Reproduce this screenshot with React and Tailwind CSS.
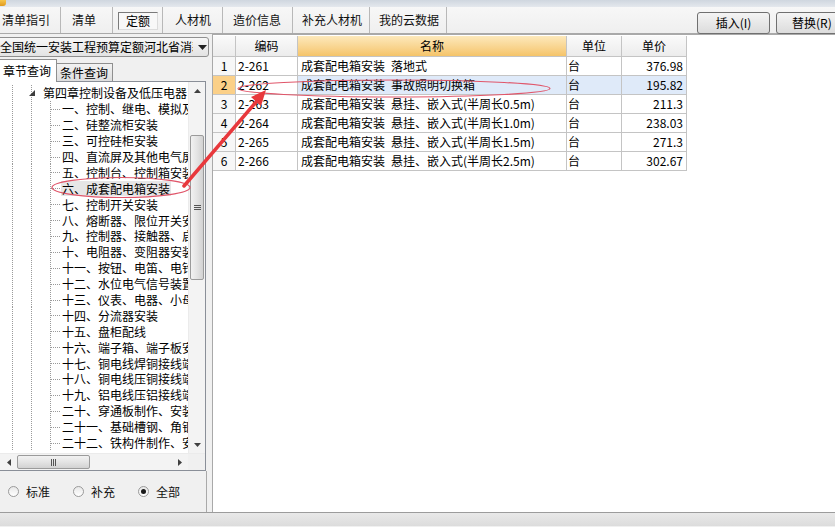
import React from 'react';

const FONT = "font-['Noto_Sans_CJK_SC','Noto_Sans',sans-serif]";

const tabs = [
  { label: '清单指引', w: 'w-[61px]', pl: 'pl-[2px]' },
  { label: '清单', w: 'w-[52px]', pl: 'pl-[11px]' },
  { label: '定额', active: true },
  { label: '人材机', w: 'w-[60px]', pl: 'pl-[12px]' },
  { label: '造价信息', w: 'w-[70px]', pl: 'pl-[10px]' },
  { label: '补充人材机', w: 'w-[77px]', pl: 'pl-[9px]' },
  { label: '我的云数据', w: 'w-[77px]', pl: 'pl-[9px]' },
];

const children = [
  '一、控制、继电、模拟及配电屏安装',
  '二、硅整流柜安装',
  '三、可控硅柜安装',
  '四、直流屏及其他电气屏（柜）安装',
  '五、控制台、控制箱安装',
  '六、成套配电箱安装',
  '七、控制开关安装',
  '八、熔断器、限位开关安装',
  '九、控制器、接触器、启动器安装',
  '十、电阻器、变阻器安装',
  '十一、按钮、电笛、电铃安装',
  '十二、水位电气信号装置安装',
  '十三、仪表、电器、小母线安装',
  '十四、分流器安装',
  '十五、盘柜配线',
  '十六、端子箱、端子板安装',
  '十七、铜电线焊铜接线端子',
  '十八、铜电线压铜接线端子',
  '十九、铝电线压铝接线端子',
  '二十、穿通板制作、安装',
  '二十一、基础槽钢、角钢安装',
  '二十二、铁构件制作、安装',
];

const rows = [
  ['1', '2-261', '成套配电箱安装\u2002落地式', '台', '376.98'],
  ['2', '2-262', '成套配电箱安装\u2002事故照明切换箱', '台', '195.82'],
  ['3', '2-263', '成套配电箱安装\u2002悬挂、嵌入式(半周长0.5m)', '台', '211.3'],
  ['4', '2-264', '成套配电箱安装\u2002悬挂、嵌入式(半周长1.0m)', '台', '238.03'],
  ['5', '2-265', '成套配电箱安装\u2002悬挂、嵌入式(半周长1.5m)', '台', '271.3'],
  ['6', '2-266', '成套配电箱安装\u2002悬挂、嵌入式(半周长2.5m)', '台', '302.67'],
];

function Gutter({ chapter }) {
  if (chapter) {
    return (
      <svg width="43" height="16" className="shrink-0">
        <line x1="12.5" y1="0" x2="12.5" y2="16" stroke="#9a9a9a" strokeDasharray="1 1" />
        <line x1="31.5" y1="0" x2="31.5" y2="16" stroke="#9a9a9a" strokeDasharray="1 1" />
        <polygon points="35,5 35,11 29,11" fill="#3c3c3c" />
      </svg>
    );
  }
  return (
    <svg width="62" height="16" className="shrink-0">
      <line x1="12.5" y1="0" x2="12.5" y2="16" stroke="#9a9a9a" strokeDasharray="1 1" />
      <line x1="31.5" y1="0" x2="31.5" y2="16" stroke="#9a9a9a" strokeDasharray="1 1" />
      <line x1="50.5" y1="0" x2="50.5" y2="16" stroke="#9a9a9a" strokeDasharray="1 1" />
      <line x1="51" y1="8.5" x2="60" y2="8.5" stroke="#9a9a9a" strokeDasharray="1 1" />
    </svg>
  );
}

function Radio({ checked, label }) {
  return (
    <div className="flex items-center gap-[7px]">
      <span className="w-[11px] h-[11px] rounded-full border border-[#9a9a9a] bg-gradient-to-b from-[#e8e8e8] to-[#ffffff] flex items-center justify-center">
        {checked && <span className="w-[5px] h-[5px] rounded-full bg-[#1a1a1a]" />}
      </span>
      <span className="text-[12px] leading-[14px] text-[#111]">{label}</span>
    </div>
  );
}

export default function App() {
  return (
    <div className={`w-[835px] h-[527px] overflow-hidden relative bg-[#f0f0f0] text-black ${FONT}`}>
      {/* top strip */}
      <div className="h-[7px] bg-gradient-to-b from-[#cfd6df] to-[#e4e8ed] flex">
        <div className="w-[6px] h-[6px] rounded-br-[3px] bg-gradient-to-b from-[#f7c64a] to-[#e09a1a]" />
      </div>

      {/* tabs row */}
      <div className="h-[27px] flex items-stretch border-b border-[#a9a9a9] bg-gradient-to-b from-[#f7f7f7] to-[#efefef]">
        {tabs.map((t) =>
          t.active ? (
            <div key={t.label} className="w-[50px] pl-[5px] pt-[5px] border-r border-[#b8b8b8] shrink-0">
              <div className="w-[40px] h-[18px] border border-t-[#7a7a7a] border-l-[#7a7a7a] border-r-[#dcdcdc] border-b-[#dcdcdc] bg-[#f8f8f8] flex items-center justify-center text-[12px] leading-[14px]">
                {t.label}
              </div>
            </div>
          ) : (
            <div key={t.label} className={`${t.w} ${t.pl} shrink-0 border-r border-[#b8b8b8] flex items-center text-[12px] leading-[14px] text-[#111]`}>
              {t.label}
            </div>
          )
        )}
        <div className="flex-1" />
        <div className="flex items-start pt-[5px] gap-[6px]">
          <button className="w-[73px] h-[22px] rounded-[3px] border border-[#707070] bg-gradient-to-b from-[#f4f4f4] to-[#dcdcdc] text-[12px] leading-[14px] flex items-center justify-center">
            插入(I)
          </button>
          <button className="w-[70px] h-[22px] -mr-[11px] rounded-[3px] border border-[#707070] bg-gradient-to-b from-[#f4f4f4] to-[#dcdcdc] text-[12px] leading-[14px] flex items-center justify-start pl-[15px]">
            替换(R)
          </button>
        </div>
      </div>

      {/* main */}
      <div className="flex h-[478px]">
        {/* left panel */}
        <div className="w-[210px] flex flex-col shrink-0">
          <div className="pt-[3px] h-[23px]">
            <div className="-ml-[3px] w-[212px] h-[20px] rounded-[3px] border border-[#8f8f8f] bg-gradient-to-b from-[#f7f7f7] to-[#e3e3e3] flex items-center pl-[2px]">
              <span className="text-[12px] leading-[14px] whitespace-nowrap overflow-hidden w-[193px]">全国统一安装工程预算定额河北省消耗量定额</span>
              <svg width="9" height="5" className="ml-[5px]"><polygon points="0,0 9,0 4.5,5" fill="#222" /></svg>
            </div>
          </div>
          <div className="h-[24px] flex items-end">
            <div className="w-[58px] h-[23px] -ml-[1px] bg-white border border-b-0 border-[#8f8f8f] flex items-center pl-[3px] text-[12px] leading-[14px] relative z-10 -mb-[1px]">
              章节查询
            </div>
            <div className="w-[56px] h-[18px] bg-gradient-to-b from-[#f2f2f2] to-[#dedede] border border-b-0 border-l-0 border-[#8f8f8f] flex items-center pl-[3px] text-[12px] leading-[14px]">
              条件查询
            </div>
          </div>
          {/* tree box */}
          <div className="w-[206px] h-[390px] border border-l-0 border-[#8a8f98] bg-white flex flex-col">
            <div className="flex flex-1 min-h-0">
              <div className="flex-1 overflow-hidden pt-[3px]">
                <div className="h-[15.9px] flex items-center whitespace-nowrap">
                  <Gutter chapter />
                  <span className="text-[12px] leading-[14px]">第四章控制设备及低压电器</span>
                </div>
                {children.map((c) => (
                  <div key={c} className="h-[15.9px] flex items-center whitespace-nowrap">
                    <Gutter />
                    <span className={`text-[12px] leading-[15px] px-[1px] -ml-[1px] ${c.startsWith('六') ? 'bg-[#e6e6e6]' : ''}`}>{c}</span>
                  </div>
                ))}
              </div>
              {/* vertical scrollbar */}
              <div className="w-[17px] shrink-0 flex flex-col bg-[#f3f3f3] border-l border-[#ebebeb]">
                <div className="h-[17px] flex items-center justify-center">
                  <svg width="7" height="4"><polygon points="0,4 7,4 3.5,0" fill="#404040" /></svg>
                </div>
                <div className="h-[36px]" />
                <div className="h-[145px] mx-[1px] rounded-[2px] border border-[#9b9b9b] bg-gradient-to-r from-[#f2f2f2] via-[#e4e4e4] to-[#d2d2d2] flex items-center justify-center">
                  <svg width="7" height="7">
                    <line x1="0" y1="1.5" x2="7" y2="1.5" stroke="#555" />
                    <line x1="0" y1="3.5" x2="7" y2="3.5" stroke="#555" />
                    <line x1="0" y1="5.5" x2="7" y2="5.5" stroke="#555" />
                  </svg>
                </div>
                <div className="flex-1" />
                <div className="h-[17px] flex items-center justify-center">
                  <svg width="7" height="4"><polygon points="0,0 7,0 3.5,4" fill="#404040" /></svg>
                </div>
              </div>
            </div>
            {/* horizontal scrollbar */}
            <div className="h-[17px] flex bg-[#f3f3f3] border-t border-[#ebebeb]">
              <div className="w-[17px] flex items-center justify-center">
                <svg width="4" height="7"><polygon points="4,0 4,7 0,3.5" fill="#404040" /></svg>
              </div>
              <div className="w-[73px] my-[1px] rounded-[2px] border border-[#9b9b9b] bg-gradient-to-b from-[#f2f2f2] via-[#e4e4e4] to-[#d2d2d2] flex items-center justify-center">
                <svg width="7" height="7">
                  <line x1="1.5" y1="0" x2="1.5" y2="7" stroke="#555" />
                  <line x1="3.5" y1="0" x2="3.5" y2="7" stroke="#555" />
                  <line x1="5.5" y1="0" x2="5.5" y2="7" stroke="#555" />
                </svg>
              </div>
              <div className="flex-1" />
              <div className="w-[17px] flex items-center justify-center">
                <svg width="4" height="7"><polygon points="0,0 0,7 4,3.5" fill="#404040" /></svg>
              </div>
              <div className="w-[17px] bg-[#f0f0f0]" />
            </div>
          </div>
          {/* radios */}
          <div className="flex-1 w-[207px] border-r border-[#a9a9a9] flex items-center pl-[8px] gap-[23px]">
            <Radio label="标准" />
            <Radio label="补充" />
            <Radio checked label="全部" />
          </div>
        </div>

        <div className="w-[2px] shrink-0" />

        {/* right panel */}
        <div className="flex-1 bg-white border-l border-t border-[#a9a9a9] pt-[1px]">
          <div className="grid grid-cols-[23px_62px_269px_55px_65px] w-fit text-[12px] leading-[14px]">
            <div className="h-[21px] border-r border-b border-[#c4c4c4] bg-gradient-to-b from-[#fafafa] to-[#ececec]" />
            <div className="h-[21px] border-r border-b border-[#c4c4c4] bg-gradient-to-b from-[#fafafa] to-[#ececec] flex items-center justify-center">编码</div>
            <div className="h-[21px] border-r border-b border-[#c4c4c4] bg-gradient-to-b from-[#fde9bb] to-[#f5c469] flex items-center justify-center">名称</div>
            <div className="h-[21px] border-r border-b border-[#c4c4c4] bg-gradient-to-b from-[#fafafa] to-[#ececec] flex items-center justify-center">单位</div>
            <div className="h-[21px] border-r border-b border-[#c4c4c4] bg-gradient-to-b from-[#fafafa] to-[#ececec] flex items-center justify-center">单价</div>
            {rows.map((r, i) => {
              const sel = i === 1;
              return (
                <React.Fragment key={r[0]}>
                  <div className={`h-[19px] border-r border-b border-[#c4c4c4] flex items-center justify-center ${sel ? 'bg-[#fbd088]' : 'bg-[#f7f7f7]'}`}>{r[0]}</div>
                  <div className="h-[19px] border-r border-b border-[#c4c4c4] flex items-center pl-[2px] whitespace-nowrap">{r[1]}</div>
                  <div className={`h-[19px] border-r border-b border-[#c4c4c4] flex items-center pl-[3px] whitespace-nowrap overflow-hidden ${sel ? 'bg-[#dfeaf9]' : ''}`}>{r[2]}</div>
                  <div className={`h-[19px] border-r border-b border-[#c4c4c4] flex items-center pl-[1px] ${sel ? 'bg-[#dfeaf9]' : ''}`}>{r[3]}</div>
                  <div className={`h-[19px] border-r border-b border-[#c4c4c4] flex items-center justify-end pr-[3px] ${sel ? 'bg-[#dfeaf9]' : ''}`}>{r[4]}</div>
                </React.Fragment>
              );
            })}
          </div>
        </div>
      </div>

      {/* bottom strip */}
      <div className="h-[14px] border-t border-[#9c9c9c] bg-gradient-to-b from-[#e9e9e9] to-[#dcdcdc]" />

      {/* annotations */}
      <svg className="absolute inset-0 pointer-events-none" width="835" height="527">
        <ellipse cx="121" cy="187.5" rx="69" ry="10" fill="none" stroke="#e0566a" strokeWidth="1.2" />
        <ellipse cx="394" cy="88.5" rx="156" ry="8.5" fill="none" stroke="#e0566a" strokeWidth="1.2" />
        <line x1="184" y1="186" x2="257" y2="101" stroke="#e8383c" strokeWidth="3.5" strokeLinecap="round" />
        <polygon points="266,90 261,106 251,97" fill="#e8383c" />
      </svg>
    </div>
  );
}
